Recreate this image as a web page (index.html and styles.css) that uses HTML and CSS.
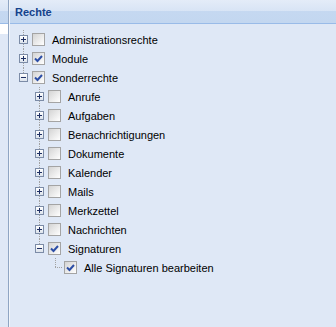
FILE: index.html
```html
<!DOCTYPE html>
<html lang="de">
<head>
    <meta charset="UTF-8">
    <title>Rechte</title>
    <link rel="stylesheet" href="styles.css">
</head>
<body>
    <div class="side">
        <div class="side-header"></div>
        <div class="side-row"></div>
    </div>
    <div class="panel">
        <div class="panel-header">Rechte</div>
        <div class="tree">
            <div class="node"><span class="elbow plus"><span class="exp"></span></span><span class="cb"></span><span class="label">Administrationsrechte</span></div>
            <div class="node"><span class="elbow plus"><span class="exp"></span></span><span class="cb checked"><svg width="11" height="11"><path d="M2 5.5l2.5 2.5 4.5-5" fill="none" stroke="#2c4ea6" stroke-width="2"/></svg></span><span class="label">Module</span></div>
            <div class="node"><span class="elbow end"><span class="exp minus"></span></span><span class="cb checked"><svg width="11" height="11"><path d="M2 5.5l2.5 2.5 4.5-5" fill="none" stroke="#2c4ea6" stroke-width="2"/></svg></span><span class="label">Sonderrechte</span></div>

            <div class="node"><span class="indent"></span><span class="elbow plus"><span class="exp"></span></span><span class="cb"></span><span class="label">Anrufe</span></div>
            <div class="node"><span class="indent"></span><span class="elbow plus"><span class="exp"></span></span><span class="cb"></span><span class="label">Aufgaben</span></div>
            <div class="node"><span class="indent"></span><span class="elbow plus"><span class="exp"></span></span><span class="cb"></span><span class="label">Benachrichtigungen</span></div>
            <div class="node"><span class="indent"></span><span class="elbow plus"><span class="exp"></span></span><span class="cb"></span><span class="label">Dokumente</span></div>
            <div class="node"><span class="indent"></span><span class="elbow plus"><span class="exp"></span></span><span class="cb"></span><span class="label">Kalender</span></div>
            <div class="node"><span class="indent"></span><span class="elbow plus"><span class="exp"></span></span><span class="cb"></span><span class="label">Mails</span></div>
            <div class="node"><span class="indent"></span><span class="elbow plus"><span class="exp"></span></span><span class="cb"></span><span class="label">Merkzettel</span></div>
            <div class="node"><span class="indent"></span><span class="elbow plus"><span class="exp"></span></span><span class="cb"></span><span class="label">Nachrichten</span></div>
            <div class="node"><span class="indent"></span><span class="elbow end"><span class="exp minus"></span></span><span class="cb checked"><svg width="11" height="11"><path d="M2 5.5l2.5 2.5 4.5-5" fill="none" stroke="#2c4ea6" stroke-width="2"/></svg></span><span class="label">Signaturen</span></div>

            <div class="node"><span class="indent"></span><span class="indent"></span><span class="elbow end leaf"></span><span class="cb checked"><svg width="11" height="11"><path d="M2 5.5l2.5 2.5 4.5-5" fill="none" stroke="#2c4ea6" stroke-width="2"/></svg></span><span class="label">Alle Signaturen bearbeiten</span></div>
        </div>
    </div>
</body>
</html>
```

FILE: styles.css
```css
* { margin: 0; padding: 0; box-sizing: border-box; }
body {
    font-family: "Liberation Sans", Arial, sans-serif;
    font-size: 11px;
    background: #dfe8f6;
    display: flex;
    height: 327px;
    overflow: hidden;
}
.side {
    width: 9px;
    border-right: 1px solid #8fa5c3;
}
.side-header,
.panel-header {
    height: 24px;
    border-bottom: 1px solid #99bbe8;
    background: linear-gradient(to bottom, #e4ecf8 0, #d8e4f5 11px, #c5d8f1 11px, #c3d7f0 23px);
}
.side-row { height: 10px; background: #fff; }
.panel {
    flex: 1;
    border-left: 1px solid #f1f5fb;
}
.panel-header {
    padding: 6px 0 0 5px;
    line-height: 13px;
    font-weight: bold;
    color: #15428b;
}
.tree { padding: 6px 0 0 5px; }
.node {
    display: flex;
    align-items: center;
    height: 19px;
    color: #000;
}
.indent, .elbow {
    width: 16px;
    height: 19px;
    flex: none;
    display: flex;
    align-items: center;
    padding-left: 4px;
}
.elbow {
    background: repeating-linear-gradient(to bottom, #a3a3a3 0 1px, transparent 1px 2px) 8px 0 / 1px 19px no-repeat;
}
.elbow.end { background-size: 1px 10px; }
.elbow.leaf {
    background:
        repeating-linear-gradient(to right, #a3a3a3 0 1px, transparent 1px 2px) 8px 9px / 8px 1px no-repeat,
        repeating-linear-gradient(to bottom, #a3a3a3 0 1px, transparent 1px 2px) 8px 0 / 1px 10px no-repeat;
}
.exp {
    width: 9px;
    height: 9px;
    border: 1px solid #7c8ca7;
    background:
        linear-gradient(#1e2f63, #1e2f63) center / 5px 1px no-repeat,
        linear-gradient(#1e2f63, #1e2f63) center / 1px 5px no-repeat,
        linear-gradient(#fff, #dce3ec);
}
.exp.minus {
    background:
        linear-gradient(#1e2f63, #1e2f63) center / 5px 1px no-repeat,
        linear-gradient(#fff, #dce3ec);
}
.cb {
    width: 13px;
    height: 13px;
    flex: none;
    margin-left: 1px;
    border: 1px solid #a4a4a4;
    background: linear-gradient(135deg, #d4d4d4, #f2f2f2 70%, #fff);
    display: flex;
}
.cb svg { display: block; }
.label {
    margin-left: 7px;
    padding-top: 1px;
    white-space: nowrap;
}
```
